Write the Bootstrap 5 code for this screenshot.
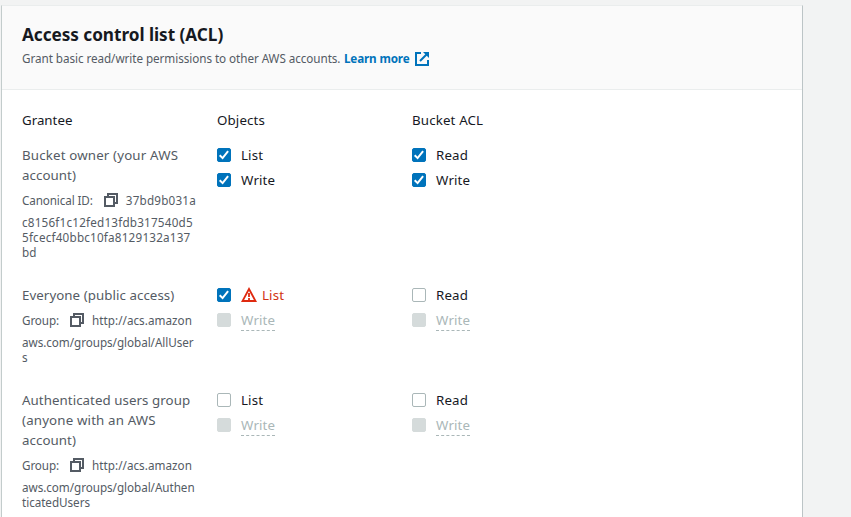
<!DOCTYPE html>
<html lang="en">
<head>
<meta charset="utf-8">
<meta name="viewport" content="width=device-width, initial-scale=1">
<title>Access control list (ACL)</title>
<link href="https://cdn.jsdelivr.net/npm/bootstrap@5.3.0/dist/css/bootstrap.min.css" rel="stylesheet">
<style>
html,body{height:100%;overflow:hidden}
body{background:#f2f3f3;font-family:"Noto Sans","Open Sans",sans-serif;font-size:13.3px;line-height:20px;color:#16191f}
.acl-panel{width:802px;margin:5px 0 0 1px;border:1px solid #bcc4c6;border-top-color:#eaeded;border-left-color:#c3cccc;border-bottom:0;border-radius:0;height:512px}
.acl-head.card-header{background:#fafafa;border-bottom:1px solid #eaeded;height:84px;padding:18px 20px 0;border-radius:0}
.acl-title{font-size:17.2px;line-height:22px;font-weight:700;margin:0;letter-spacing:-.04px}
.acl-desc{font-size:11.7px;line-height:18px;color:#545b64;margin-top:3px;letter-spacing:-.06px;white-space:nowrap}
.acl-link{color:#0073bb;font-weight:700;letter-spacing:-.15px;margin-left:3.5px;text-decoration:none}
.acl-link svg{margin:2px 0 0 5.500px}
.acl-body{padding:20px 20px 0}
.acl-row{display:grid;grid-template-columns:175px 175px 175px;column-gap:20px}
.heads{height:35px;letter-spacing:.15px}
.heads :first-child{letter-spacing:0}
.r1{height:140px}
.r2{height:105px}
.grantee{color:#545b64;white-space:nowrap;letter-spacing:.06px}
.wide{letter-spacing:.16px}
.meta{font-size:11.7px;line-height:15px;letter-spacing:-.05px}
.meta-top{height:30px;line-height:20px;padding-bottom:1px;display:flex;align-items:center}
.meta-top svg{flex:none;margin:1px 8px 0 11px}
.label-sm{letter-spacing:-.12px}
.num{letter-spacing:.2px}
.url{letter-spacing:.03px}
.opt{height:20px;margin-bottom:5px;display:flex;align-items:flex-start;letter-spacing:.15px}
.form-check-input.acl-check{width:14px;height:14px;margin:3px 10px 0 0;border:1px solid #aab7b8;border-radius:2px;flex:none}
.form-check-input.acl-check:checked{background-color:#0073bb;border-color:#0073bb;background-image:url("data:image/svg+xml,%3Csvg xmlns='http://www.w3.org/2000/svg' viewBox='0 0 12 12'%3E%3Cpath d='M1.700 6.200l2.900 2.900 5.500-6.900' fill='none' stroke='white' stroke-width='2'/%3E%3C/svg%3E");background-size:12px 12px}
.form-check-input.acl-check:disabled{background-color:#d5dbdb;border-color:#d5dbdb;opacity:1}
.off{color:#aab7b8;height:21px;border-bottom:1px dashed #aab7b8}
.warn{color:#d13212}
.warn svg{margin:2px 5px 0 0;flex:none}
</style>
</head>
<body>
<svg class="d-none" aria-hidden="true">
<symbol id="copy" viewBox="0 0 14 14"><path d="M1 4h9v9H1zM4 4V1h9v9h-3" fill="none" stroke="#545b64" stroke-width="2"/></symbol>
<symbol id="external" viewBox="0 0 14 14"><path d="M6 1H1v12h12V8M12.500 1.500L5 9" fill="none" stroke="#0073bb" stroke-width="2"/><path d="M8 0h6v6l-2-2-2-2z" fill="#0073bb"/></symbol>
<symbol id="alert" viewBox="0 0 16 16"><path d="M8 2L1.500 14h13z" fill="none" stroke="#df2a10" stroke-width="1.800"/><path d="M8 6v4M8 11v2" stroke="#df2a10" stroke-width="1.800"/></symbol>
</svg>
<main class="card acl-panel">
<header class="card-header acl-head">
<h2 class="acl-title">Access control list (ACL)</h2>
<div class="acl-desc d-flex align-items-center"><span>Grant basic read/write permissions to other AWS accounts.</span><a class="acl-link d-flex align-items-center" href="#">Learn more<svg width="14" height="14"><use href="#external"/></svg></a></div>
</header>
<div class="acl-body">
<div class="acl-row heads"><span>Grantee</span><span>Objects</span><span>Bucket ACL</span></div>

<div class="acl-row r1">
<div class="grantee"><span class="wide">Bucket owner (your AWS</span><br>account)
<div class="meta"><div class="meta-top"><span class="label-sm">Canonical ID:</span><svg width="14" height="14"><use href="#copy"/></svg><span class="num">37bd9b031a</span></div><span class="num">c8156f1c12fed13fdb317540d5<br>5fcecf40bbc10fa8129132a137<br></span>bd</div></div>
<div>
<label class="opt"><input class="form-check-input acl-check" type="checkbox" checked>List</label>
<label class="opt"><input class="form-check-input acl-check" type="checkbox" checked>Write</label>
</div>
<div>
<label class="opt"><input class="form-check-input acl-check" type="checkbox" checked>Read</label>
<label class="opt"><input class="form-check-input acl-check" type="checkbox" checked>Write</label>
</div>
</div>

<div class="acl-row r2">
<div class="grantee">Everyone (public access)
<div class="meta"><div class="meta-top"><span class="label-sm">Group:</span><svg width="14" height="14"><use href="#copy"/></svg><span class="url">http://acs.amazon</span></div>aws.com/groups/global/AllUser<br>s</div></div>
<div>
<label class="opt warn"><input class="form-check-input acl-check" type="checkbox" checked><svg width="16" height="16"><use href="#alert"/></svg>List</label>
<label class="opt"><input class="form-check-input acl-check" type="checkbox" disabled><span class="off">Write</span></label>
</div>
<div>
<label class="opt"><input class="form-check-input acl-check" type="checkbox">Read</label>
<label class="opt"><input class="form-check-input acl-check" type="checkbox" disabled><span class="off">Write</span></label>
</div>
</div>

<div class="acl-row">
<div class="grantee">Authenticated users group<br><span class="wide">(anyone with an AWS</span><br>account)
<div class="meta"><div class="meta-top"><span class="label-sm">Group:</span><svg width="14" height="14"><use href="#copy"/></svg><span class="url">http://acs.amazon</span></div>aws.com/groups/global/Authen<br>ticatedUsers</div></div>
<div>
<label class="opt"><input class="form-check-input acl-check" type="checkbox">List</label>
<label class="opt"><input class="form-check-input acl-check" type="checkbox" disabled><span class="off">Write</span></label>
</div>
<div>
<label class="opt"><input class="form-check-input acl-check" type="checkbox">Read</label>
<label class="opt"><input class="form-check-input acl-check" type="checkbox" disabled><span class="off">Write</span></label>
</div>
</div>
</div>
</main>
</body>
</html>
